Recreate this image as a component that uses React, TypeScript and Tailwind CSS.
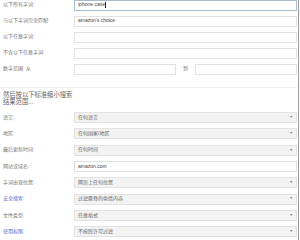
import React from "react";

const font = { fontFamily: '"Liberation Sans", "Noto Sans CJK SC", sans-serif' };

function Label({ text, blue }: { text: string; blue?: boolean }) {
  return (
    <div className={`w-[74px] shrink-0 pl-[3px] text-[5px] ${blue ? "text-[#5566c4]" : "text-[#777]"}`}>
      {text}
    </div>
  );
}

function TextInput({ value, focused, caret }: { value?: string; focused?: boolean; caret?: boolean }) {
  return (
    <div
      className={`flex h-[11px] flex-1 items-center bg-white px-[3px] text-[5px] text-[#444] border ${
        focused ? "border-[#a9bccb]" : "border-[#e2e2e2]"
      }`}
    >
      {value}
      {caret && <span className="ml-[0.5px] inline-block h-[6px] w-[0.6px] bg-[#222]" />}
    </div>
  );
}

function SelectBox({ value }: { value: string }) {
  return (
    <div className="flex h-[11px] flex-1 items-center justify-between border border-[#e2e2e2] bg-[#f3f3f3] px-[3px] text-[5px] text-[#666]">
      <span>{value}</span>
      <span className="text-[3.5px] text-[#777]">▼</span>
    </div>
  );
}

const selects = [
  { label: "语言:", value: "任何语言" },
  { label: "地区:", value: "任何国家/地区" },
  { label: "最后更新时间:", value: "任何时间" },
  { label: "网站或域名:", value: "amazon.com", input: true },
  { label: "字词出现位置:", value: "网页上任何位置" },
  { label: "安全搜索:", value: "过滤露骨的色情内容", blue: true },
  { label: "文件类型:", value: "任意格式" },
  { label: "使用权限:", value: "不按照许可过滤", blue: true },
];

export default function App() {
  return (
    <div className="flex h-[240px] w-[300px] overflow-hidden bg-white" style={font}>
      <div className="w-[298px] shrink-0 pr-[1px]">
        {/* top keyword rows */}
        <div className="-mt-[3px] flex flex-col">
          <div className="flex h-[16px] items-center">
            <Label text="以下所有字词:" />
            <TextInput value="iphone case" focused caret />
          </div>
          <div className="flex h-[16px] items-center">
            <Label text="与以下字词完全匹配:" />
            <TextInput value="amazon's choice" />
          </div>
          <div className="flex h-[16px] items-center">
            <Label text="以下任意字词:" />
            <TextInput />
          </div>
          <div className="flex h-[16px] items-center">
            <Label text="不含以下任意字词:" />
            <TextInput />
          </div>
          <div className="flex h-[16px] items-center">
            <Label text="数字范围:  从" />
            <div className="flex flex-1 items-center">
              <div className="h-[11px] w-[102px] border border-[#e2e2e2] bg-white" />
              <div className="w-[19px] text-center text-[5px] text-[#777]">到</div>
              <div className="h-[11px] flex-1 border border-[#e2e2e2] bg-white" />
            </div>
          </div>
        </div>

        <div className="mt-[10px] border-t border-[#efefef]" />

        <div className="h-[21.4px] pl-[3px] pt-[4px]">
          <div className="w-[72px] text-[6.3px] leading-[6.5px] text-[#666]">然后按以下标准缩小搜索结果范围...</div>
        </div>

        <div className="flex flex-col">
          {selects.map((s) => (
            <div key={s.label} className="flex h-[16.3px] items-center">
              <Label text={s.label} blue={s.blue} />
              {s.input ? <TextInput value={s.value} /> : <SelectBox value={s.value} />}
            </div>
          ))}
        </div>
      </div>
      <div className="h-full w-[1px] bg-[#9a9a9a]" />
      <div className="h-full w-[1px] bg-white" />
    </div>
  );
}
